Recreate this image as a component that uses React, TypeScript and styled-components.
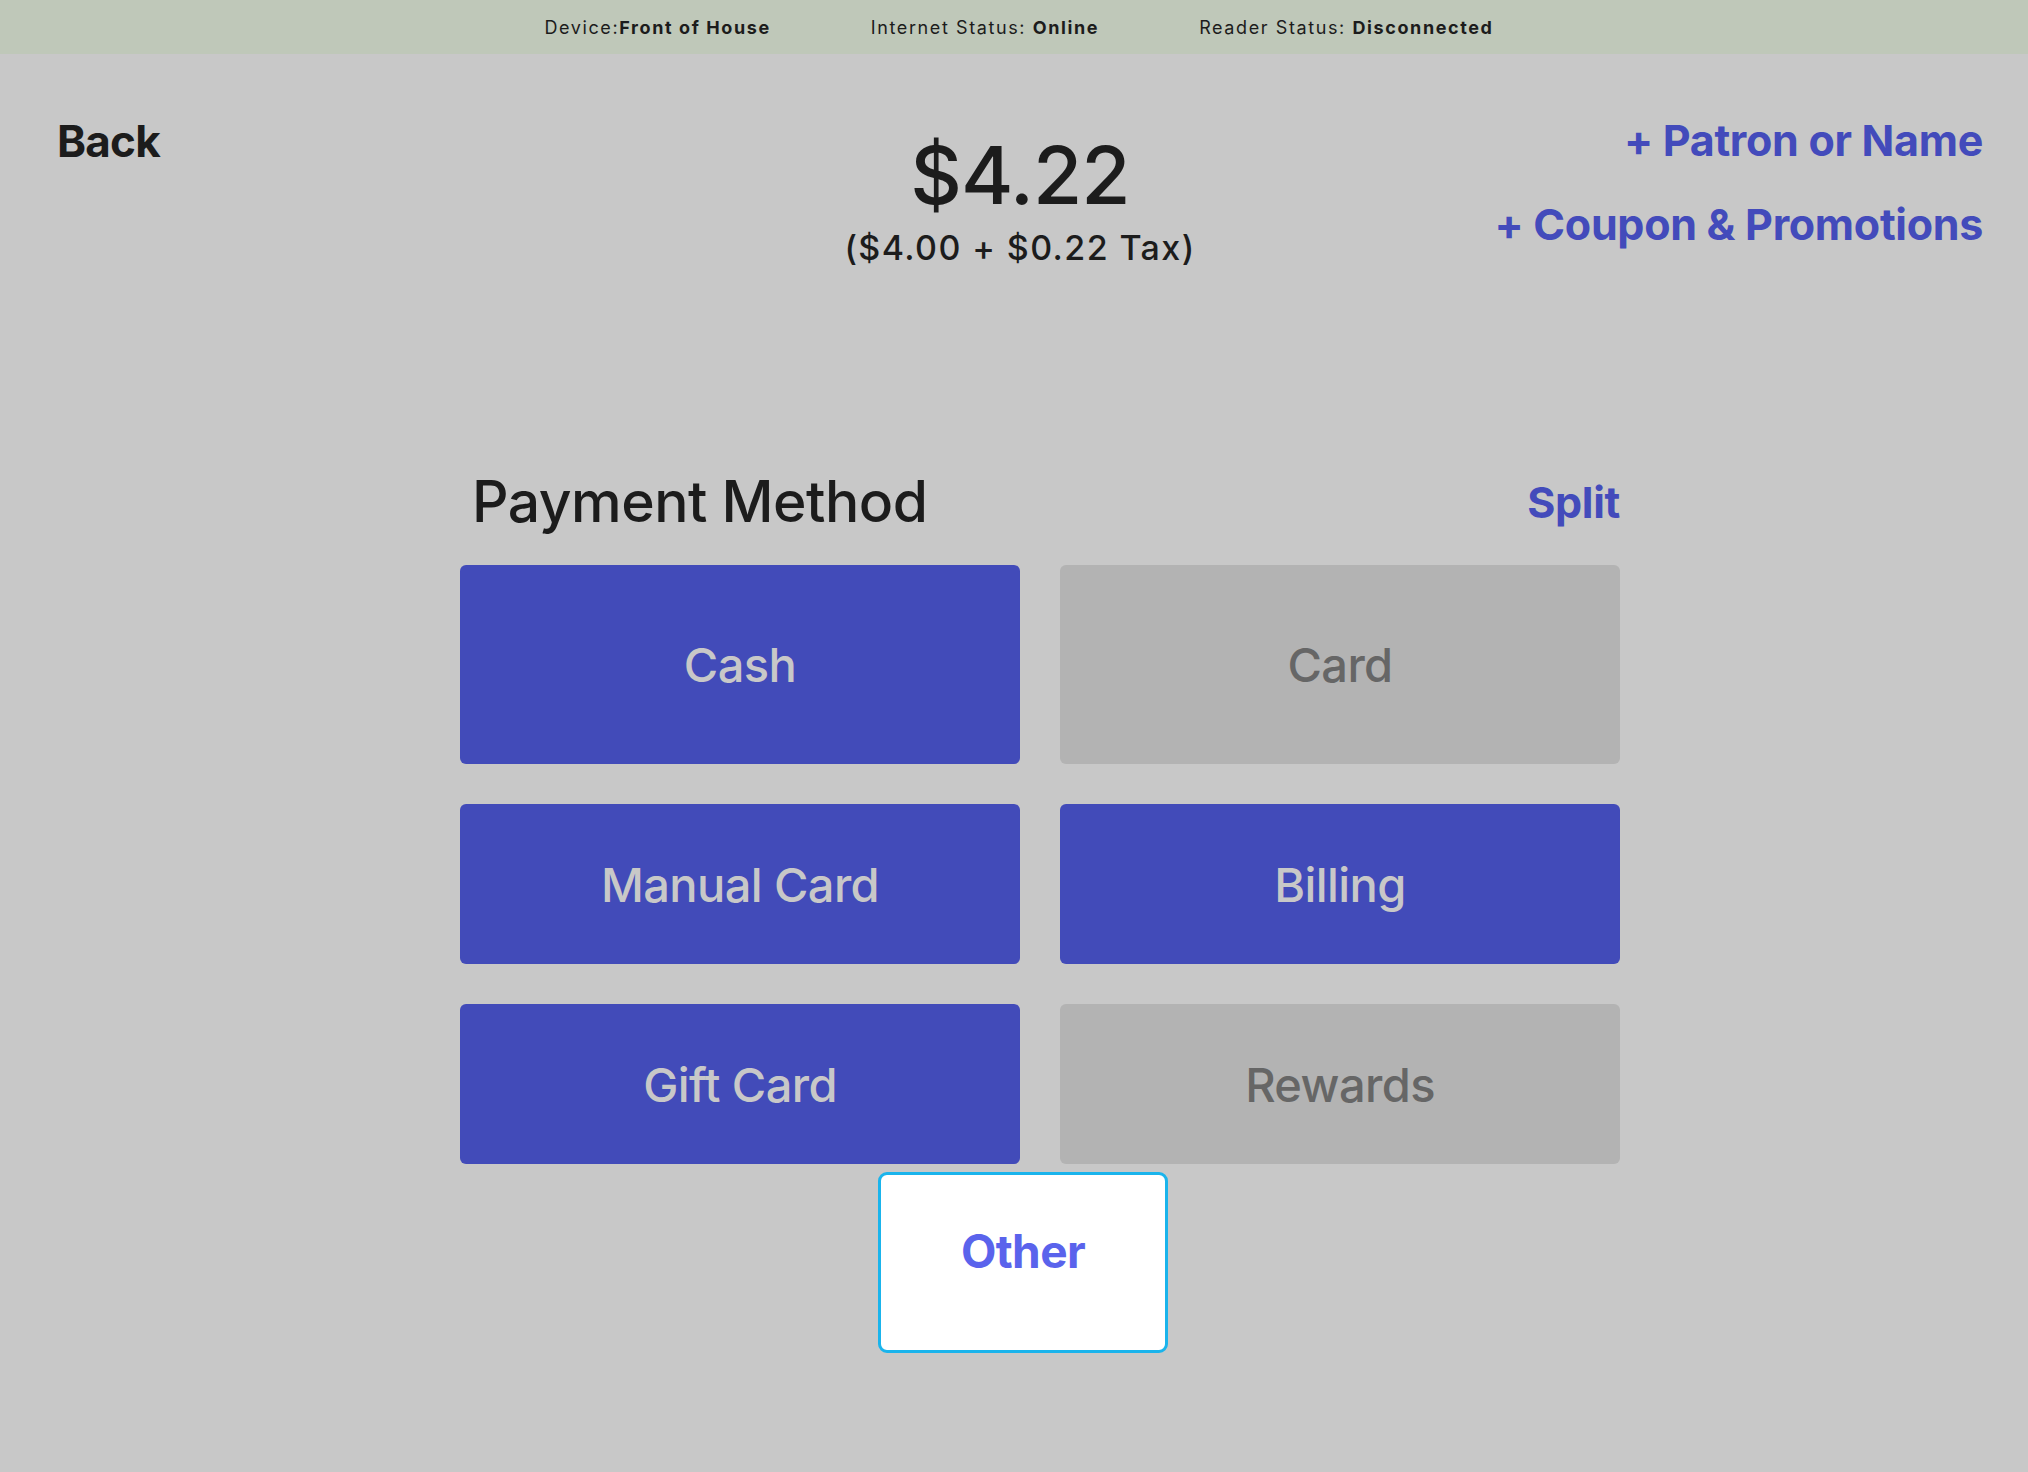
import React from 'react';
import styled, { createGlobalStyle } from 'styled-components';

const GlobalStyle = createGlobalStyle`
  html, body {
    margin: 0;
    padding: 0;
    background: #c8c8c8;
  }
  body {
    font-family: Inter, "Noto Sans", "Liberation Sans", sans-serif;
    color: #1c1c1c;
  }
  * {
    box-sizing: border-box;
  }
`;

const Page = styled.div`
  min-height: 100vh;
  background: #c8c8c8;
`;

const StatusBar = styled.div`
  height: 54px;
  background: #bfc8b9;
  display: flex;
  justify-content: center;
  align-items: center;
  gap: 100px;
  padding-left: 10px;
  font-size: 18px;
  letter-spacing: 1.6px;
  color: #1c1c1c;
`;

const StatusItem = styled.span`
  font-weight: 400;

  b {
    font-weight: 700;
  }
`;

const Header = styled.div`
  display: grid;
  grid-template-columns: 1fr auto 1fr;
  align-items: start;
  padding: 60px 45px 0 57px;
`;

const BackLink = styled.a`
  justify-self: start;
  font-size: 44px;
  font-weight: 700;
  letter-spacing: -0.8px;
  color: #1c1c1c;
  text-decoration: none;
  cursor: pointer;
`;

const Total = styled.div`
  margin-top: 12px;
  display: flex;
  flex-direction: column;
  align-items: center;
`;

const Amount = styled.div`
  font-size: 80px;
  font-weight: 500;
  letter-spacing: -1px;
`;

const Breakdown = styled.div`
  margin-top: 4px;
  font-size: 34px;
  font-weight: 500;
  letter-spacing: 1.4px;
`;

const Actions = styled.div`
  justify-self: end;
  display: flex;
  flex-direction: column;
  align-items: flex-end;
  gap: 32px;
`;

const ActionLink = styled.a`
  font-size: 43px;
  font-weight: 700;
  letter-spacing: -0.3px;
  color: #434bbb;
  text-decoration: none;
  cursor: pointer;
`;

const Section = styled.section`
  width: 1160px;
  margin: 199px 0 0 460px;
`;

const SectionHeader = styled.div`
  display: flex;
  justify-content: space-between;
  align-items: center;
  padding-left: 12px;
  margin-bottom: 29px;
`;

const Title = styled.h2`
  margin: 0;
  font-size: 57px;
  font-weight: 500;
  letter-spacing: -0.5px;
`;

const Methods = styled.div`
  display: grid;
  grid-template-columns: 560px 560px;
  grid-template-rows: 199px 160px 160px;
  gap: 40px;
`;

const MethodButton = styled.button<{ $enabled: boolean }>`
  border: none;
  border-radius: 6px;
  font-family: inherit;
  font-size: 47px;
  font-weight: 500;
  letter-spacing: -0.6px;
  background: ${(p) => (p.$enabled ? '#424bb9' : '#b3b3b3')};
  color: ${(p) => (p.$enabled ? '#c8c8c8' : '#666666')};
  cursor: ${(p) => (p.$enabled ? 'pointer' : 'default')};
`;

const OtherRow = styled.div`
  display: flex;
  justify-content: center;
  margin-top: 8px;
  padding-right: 34px;
`;

const OtherButton = styled.button`
  width: 290px;
  height: 181px;
  padding: 48px 0 0;
  display: flex;
  justify-content: center;
  align-items: flex-start;
  background: #ffffff;
  border: 3px solid #1ab4ec;
  border-radius: 9px;
  font-family: inherit;
  font-size: 46px;
  font-weight: 700;
  letter-spacing: -0.6px;
  color: #5a63ec;
  cursor: pointer;
`;

const methods = [
  { label: 'Cash', enabled: true },
  { label: 'Card', enabled: false },
  { label: 'Manual Card', enabled: true },
  { label: 'Billing', enabled: true },
  { label: 'Gift Card', enabled: true },
  { label: 'Rewards', enabled: false },
];

const App: React.FC = () => {
  return (
    <Page>
      <GlobalStyle />
      <StatusBar>
        <StatusItem>
          Device:<b>Front of House</b>
        </StatusItem>
        <StatusItem>
          Internet Status: <b>Online</b>
        </StatusItem>
        <StatusItem>
          Reader Status: <b>Disconnected</b>
        </StatusItem>
      </StatusBar>

      <Header>
        <BackLink>Back</BackLink>
        <Total>
          <Amount>$4.22</Amount>
          <Breakdown>($4.00 + $0.22 Tax)</Breakdown>
        </Total>
        <Actions>
          <ActionLink>+ Patron or Name</ActionLink>
          <ActionLink>+ Coupon &amp; Promotions</ActionLink>
        </Actions>
      </Header>

      <Section>
        <SectionHeader>
          <Title>Payment Method</Title>
          <ActionLink>Split</ActionLink>
        </SectionHeader>
        <Methods>
          {methods.map((m) => (
            <MethodButton key={m.label} $enabled={m.enabled}>
              {m.label}
            </MethodButton>
          ))}
        </Methods>
        <OtherRow>
          <OtherButton>Other</OtherButton>
        </OtherRow>
      </Section>
    </Page>
  );
};

export default App;
